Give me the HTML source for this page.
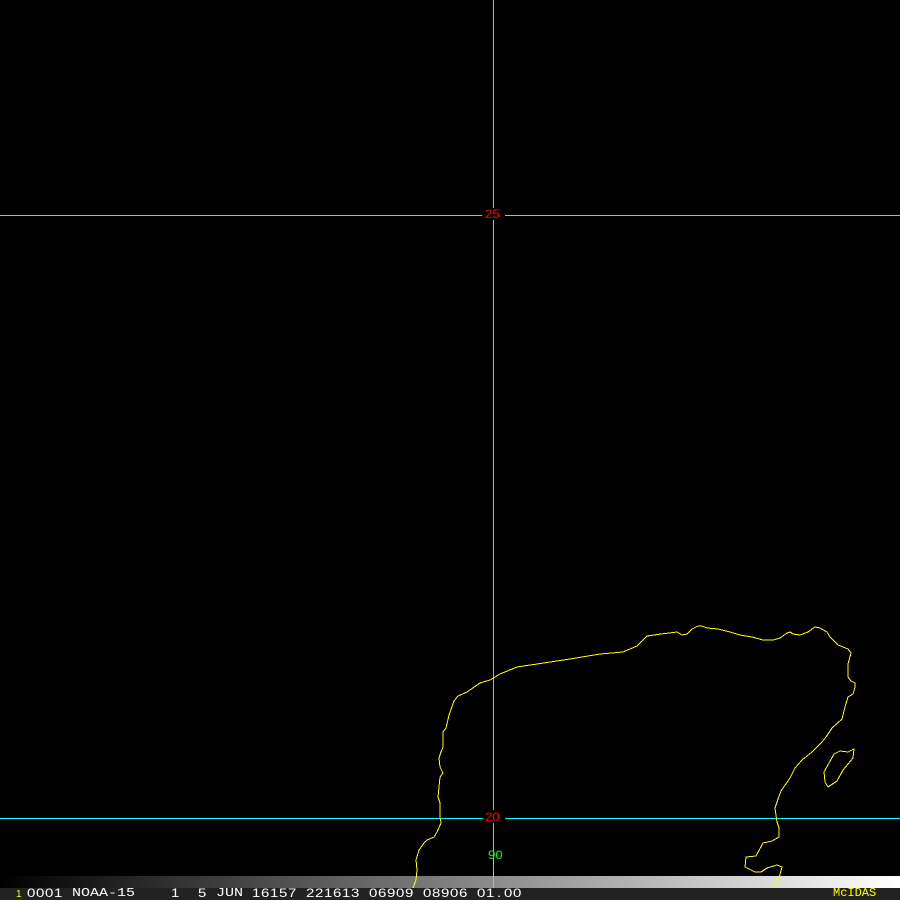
<!DOCTYPE html>
<html>
<head>
<meta charset="utf-8">
<style>
html,body{margin:0;padding:0;background:#000;}
#w{position:relative;width:900px;height:900px;overflow:hidden;background:#000;}
.b{position:absolute;}
.t{position:absolute;font-family:"Liberation Sans",sans-serif;font-size:12px;line-height:12px;white-space:pre;transform-origin:0 0;}
.n{top:887px;color:#fff;transform:scaleX(1.25);letter-spacing:.53px;}
.m{font-family:"Liberation Mono",monospace;font-size:12px;top:887px;color:#fff;transform:scaleX(1.25);}
.l{transform:scaleX(1.1);}
svg{position:absolute;left:0;top:0;}
</style>
</head>
<body>
<div id="w">
<div class="b" style="left:0;top:876px;width:900px;height:12px;background:linear-gradient(to right,#000,#fff);"></div>
<div class="b" style="left:0;top:888px;width:900px;height:12px;background:#222;"></div>
<svg width="900" height="900" viewBox="0 0 900 900">
<g stroke="#00ffff" stroke-width="1" shape-rendering="crispEdges">
<path d="M0 215.5H482M505 215.5H900"/>
<path d="M0 818.5H483M505 818.5H900"/>
<path d="M493.5 0V208M493.5 220V810M493.5 823V888"/>
</g>
<g fill="none" stroke="#ffff00" stroke-width="1" shape-rendering="crispEdges">
<path d="M413 888L416 880L417 870L416 860L419 850L424 843L427 840L434 837L437 832L441 823L440 817L440 803L438 797L440 777L443 773L440 767L439 758L441 752L443 747L443 732L446 728L449 715L454 701L458 696L467 692L480 683L490 680L500 674L517 667L537 664L570 659L600 654L623 652L637 646L647 636L661 634L677 632L682 635L687 634L692 629L698 626L702 626L707 628L718 629L730 632L740 635L752 637L763 640L773 640L780 638L787 633L790 632L793 634L800 635L808 632L815 627L820 628L827 632L830 637L838 645L848 649L851 653L848 664L848 677L851 681L855 683L855 687L853 694L848 697L845 707L842 719L832 728L826 737L822 742L812 752L802 760L795 768L790 778L781 791L778 799L775 808L777 822L779 828L779 837L772 841L763 843L756 856L746 857L745 867L755 872L761 872L767 868L777 865L782 867L779 878L777 882L771 887"/>
<path d="M854 749L848 752L840 751L834 754L824 772L825 782L828 787L837 781L843 770L853 758Z"/>
</g>
</svg>
<div class="t l" style="left:485px;top:208px;color:#ff0000;">25</div>
<div class="t l" style="left:485px;top:811px;color:#ff0000;">20</div>
<div class="t l" style="left:488px;top:849px;color:#00ff00;">90</div>
<div class="t" style="left:16px;top:889px;color:#ffff00;font-size:10px;">1</div>
<div class="t n" style="left:27px;">0001</div>
<div class="t m" style="left:72px;">NOAA-15</div>
<div class="t n" style="left:171px;">1</div>
<div class="t n" style="left:198px;">5</div>
<div class="t m" style="left:216px;">JUN</div>
<div class="t n" style="left:252px;">16157</div>
<div class="t n" style="left:306px;">221613</div>
<div class="t n" style="left:369px;">06909</div>
<div class="t n" style="left:423px;">08906</div>
<div class="t n" style="left:477px;">01</div>
<div class="t n" style="left:497px;">.</div>
<div class="t n" style="left:504px;">00</div>
<div class="t" style="left:833px;top:887px;color:#ffff00;font-family:'Liberation Mono',monospace;font-size:12px;">McIDAS</div>
</div>
</body>
</html>
